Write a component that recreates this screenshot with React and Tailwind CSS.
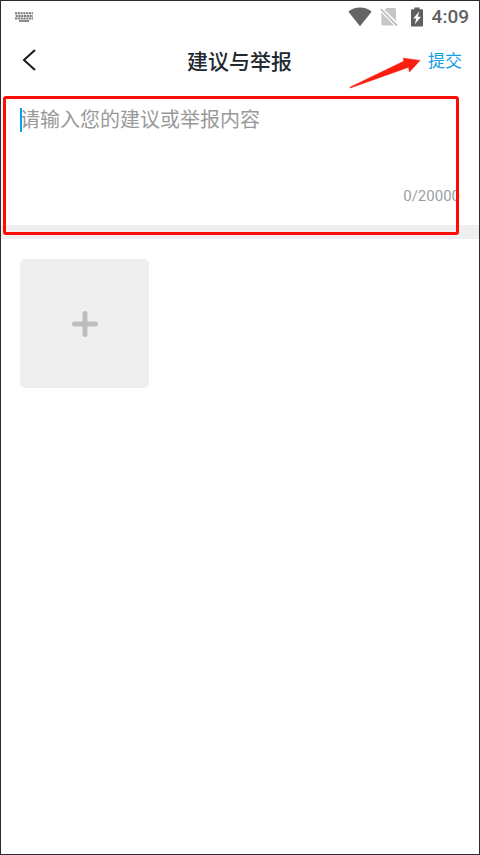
import React, { useState } from 'react';

const MAX_LENGTH = 20000;

function KeyboardIcon() {
  return (
    <svg width="18" height="10" viewBox="0 0 18 10" fill="none" stroke="#7d7d7d" aria-hidden="true">
      <path d="M0 1.2h18" strokeWidth="2" strokeDasharray="2.2 0.6" />
      <path d="M0.6 3.9h17.4" strokeWidth="2" strokeDasharray="2.2 0.6" />
      <path d="M0 6.5h18" strokeWidth="2" strokeDasharray="2.2 0.6" />
      <path d="M4 9h10" stroke="#8c8c8c" strokeWidth="2" />
    </svg>
  );
}

function WifiIcon() {
  return (
    <svg width="24" height="20" viewBox="0 0 24 20" fill="#656565" aria-hidden="true">
      <path d="M12 19.2 0.4 4.8C3.6 2 7.6 0.6 12 0.6S20.4 2 23.6 4.8Z" />
    </svg>
  );
}

function NoSimIcon() {
  return (
    <svg width="18" height="20" viewBox="0 0 18 20" aria-hidden="true">
      <path d="M6.6 1h7.8A1.6 1.6 0 0 1 16 2.6V15L4 3.4Z" fill="#c6c6c6" />
      <path d="M1.4 5.6 14 18.4H3a1.6 1.6 0 0 1-1.6-1.6Z" fill="#c6c6c6" />
      <path d="M2 1.4 17.4 16.6" stroke="#fff" strokeWidth="1.6" />
      <path d="M0.8 2 17 18.6" stroke="#b9b9b9" strokeWidth="1.6" />
    </svg>
  );
}

function BatteryIcon() {
  return (
    <svg width="14" height="20" viewBox="0 0 14 20" aria-hidden="true">
      <path d="M4.4 0.4h5.2v1.8h2.2A1.2 1.2 0 0 1 13 3.4v15a1.2 1.2 0 0 1-1.2 1.2H2.2A1.2 1.2 0 0 1 1 18.4v-15a1.2 1.2 0 0 1 1.2-1.2h2.2Z" fill="#5f5f5f" />
      <path d="M9.4 4.2 3.2 11.4h3L4.8 17.2l6.2-7.4H7.8Z" fill="#fff" />
    </svg>
  );
}

function StatusBar() {
  return (
    <div className="flex h-[31px] items-center justify-between pl-3.5 pr-2.5">
      <KeyboardIcon />
      <div className="flex items-center">
        <WifiIcon />
        <span className="ml-2 flex"><NoSimIcon /></span>
        <span className="ml-3 flex"><BatteryIcon /></span>
        <span className="ml-2 font-['Roboto',sans-serif] text-[19px] font-medium leading-6 text-[#616161]">4:09</span>
      </div>
    </div>
  );
}

function Header({ onSubmit }) {
  return (
    <header className="relative grid h-14 grid-cols-[1fr_auto_1fr] items-center pl-4 pr-[17px]">
      <button type="button" aria-label="返回" className="flex h-7 w-6 items-center justify-center">
        <svg width="14" height="22" viewBox="0 0 14 22" fill="none" stroke="#17181a" strokeWidth="2" aria-hidden="true">
          <path d="M13 1 2 11l11 10" />
        </svg>
      </button>
      <h1 className="text-[21px] font-medium leading-8 text-[#212930]">建议与举报</h1>
      <button type="button" onClick={onSubmit} className="justify-self-end text-[17px] leading-6 text-[#159fe3]">
        提交
      </button>

      {/* Arrow pointing at the submit button */}
      <svg className="pointer-events-none absolute right-[58px] top-6 z-10" width="72" height="34" viewBox="0 0 72 34" fill="#fb1d10" stroke="#fb1d10" strokeWidth="0.6" strokeLinejoin="round" aria-hidden="true">
        <path d="M1 31.2 54.800 5.200 54.200 2.200 71 4.400 60.400 16 59.600 11.200 1.200 32Z" />
      </svg>
    </header>
  );
}

function App() {
  const [content, setContent] = useState('');

  return (
    <div className="min-h-screen border border-[#2c2c2e] bg-white font-['Noto_Sans_CJK_SC',sans-serif]">
      <StatusBar />
      <Header onSubmit={() => setContent('')} />

      <main>
        <section className="relative">
          <div className="relative px-[19px] pt-[15px]">
            <span className="absolute left-[19px] top-5 h-6 w-0.5 bg-[#0aa1ea]" />
            <textarea
              aria-label="建议或举报内容"
              placeholder="请输入您的建议或举报内容"
              maxLength={MAX_LENGTH}
              value={content}
              onChange={(e) => setContent(e.target.value)}
              className="block h-[81px] w-full resize-none text-xl leading-8 text-[#212930] outline-none placeholder:text-[#999999]"
            />
          </div>
          <p className="h-[41px] px-[19px] text-right font-['Roboto',sans-serif] text-[15px] leading-6 text-[#9a9fa5]">
            {content.length}/{MAX_LENGTH}
          </p>
          <div className="h-3.5 bg-[#efefef]" />

          {/* Highlight around the input area */}
          <div className="pointer-events-none absolute bottom-1 left-0.5 right-5 top-2 rounded-[3px] border-[3px] border-[#ff0a05]" />
        </section>

        <section className="p-5 pl-[19px]">
          <button type="button" aria-label="添加图片" className="flex size-[129px] items-center justify-center rounded-[5px] bg-[#efefef]">
            <svg width="26" height="26" viewBox="0 0 26 26" stroke="#bdbdbd" strokeWidth="5" strokeLinecap="round" aria-hidden="true">
              <path d="M13 2.500v21M2.500 13h21" />
            </svg>
          </button>
        </section>
      </main>
    </div>
  );
}

export default App;
